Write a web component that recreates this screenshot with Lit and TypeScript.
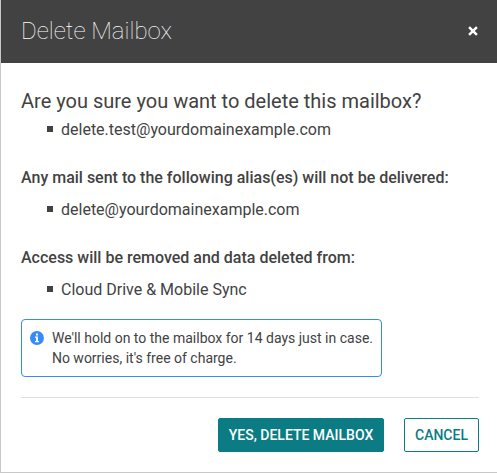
import { LitElement, html, css, svg } from "lit";
import { customElement } from "lit/decorators.js";

const closeIcon = svg`<path d="M1.1 1.1 8.9 8.9M8.9 1.1 1.1 8.9" stroke="#fff" stroke-width="2.5"/>`;

@customElement("app-root")
export class AppRoot extends LitElement {
  static styles = css`
    :host {
      display: block;
      box-sizing: border-box;
      height: 473px;
      background: #fff;
      border-left: 1px solid #c8c8c8;
      border-bottom: 1px solid #c8c8c8;
      font-family: Roboto, "Liberation Sans", sans-serif;
      font-size: 16px;
      line-height: 24px;
      color: #424242;
      overflow: hidden;
    }
    * { box-sizing: border-box; }
    header {
      height: 63px;
      padding: 0 19px 1px 20px;
      background: #424242;
      color: #fff;
      display: flex;
      align-items: center;
      justify-content: space-between;
    }
    h1 {
      margin: 0;
      font-size: 24px;
      font-weight: 100;
      line-height: 32px;
      white-space: nowrap;
    }
    .close {
      border: 0;
      padding: 0;
      background: none;
      display: flex;
    }
    .close svg { width: 10px; height: 10px; }
    main { padding: 26px 18px 0 20px; }
    h2 {
      margin: 0;
      font-size: 20px;
      font-weight: 400;
      white-space: nowrap;
    }
    h3 {
      margin: 24px 0 8px;
      font-size: 16px;
      font-weight: 500;
      white-space: nowrap;
    }
    ul {
      margin: 0;
      padding: 0 0 0 26px;
      list-style: none;
    }
    h2 + ul { margin-top: 5px; }
    li { display: flex; align-items: center; gap: 8px; }
    li::before {
      content: "";
      width: 6px;
      height: 6px;
      margin-bottom: 2px;
      background: #424242;
    }
    .notice {
      margin-top: 17px;
      width: 361px;
      height: 58px;
      padding: 8px;
      border: 1px solid #338cf8;
      border-radius: 4px;
      display: flex;
      gap: 8px;
      font-size: 14px;
      line-height: 20px;
      white-space: nowrap;
    }
    .notice svg { width: 14px; height: 14px; margin-top: 3px; }
    footer {
      margin-top: 20px;
      padding-top: 20px;
      border-top: 1px solid #e0e0e0;
      display: flex;
      justify-content: flex-end;
      gap: 20px;
    }
    .btn {
      height: 34px;
      padding: 0;
      border: 1px solid #0b7c83;
      border-radius: 2px;
      background: #fff;
      color: #0b7c83;
      font: 500 14px/20px Roboto, "Liberation Sans", sans-serif;
      white-space: nowrap;
    }
    .confirm { width: 166px; background: #0b7c83; color: #fff; }
    .cancel { width: 75px; }
  `;

  render() {
    return html`
      <header>
        <h1>Delete Mailbox</h1>
        <button class="close" aria-label="Close">
          <svg viewBox="0 0 10 10" fill="none">${closeIcon}</svg>
        </button>
      </header>
      <main>
        <h2>Are you sure you want to delete this mailbox?</h2>
        <ul><li>delete.test@yourdomainexample.com</li></ul>
        <h3>Any mail sent to the following alias(es) will not be delivered:</h3>
        <ul><li>delete@yourdomainexample.com</li></ul>
        <h3>Access will be removed and data deleted from:</h3>
        <ul><li>Cloud Drive &amp; Mobile Sync</li></ul>
        <div class="notice">
          <svg viewBox="0 0 14 14">
            <circle cx="7" cy="7" r="7" fill="#338cf8" />
            <path d="M6 2.5h2v2H6zM5 5.5h3v4.5h1v1.3H5V10h1V6.8H5z" fill="#fff" />
          </svg>
          <div>We'll hold on to the mailbox for 14 days just in case.<br />No worries, it's free of charge.</div>
        </div>
        <footer>
          <button class="btn confirm">YES, DELETE MAILBOX</button>
          <button class="btn cancel">CANCEL</button>
        </footer>
      </main>
    `;
  }
}
